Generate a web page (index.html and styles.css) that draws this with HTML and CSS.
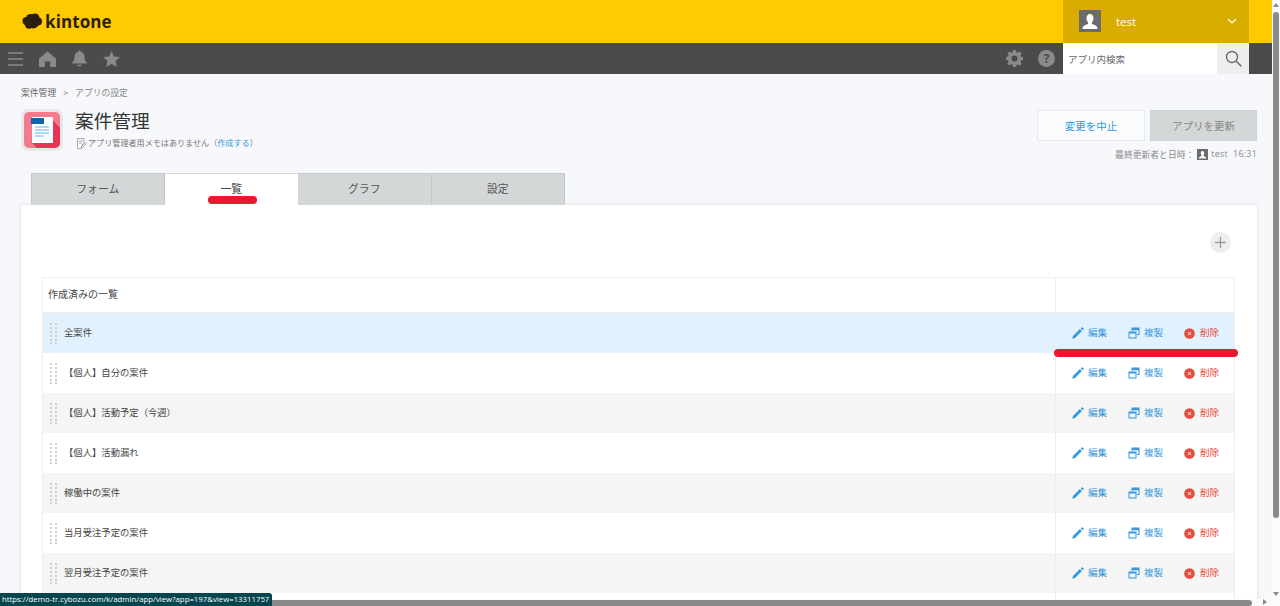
FILE: index.html
```html
<!DOCTYPE html>
<html lang="ja">
<head>
<meta charset="utf-8">
<title>案件管理 - アプリの設定</title>
<link rel="stylesheet" href="styles.css">
</head>
<body>
<svg class="defs" width="0" height="0" aria-hidden="true">
  <symbol id="i-edit" viewBox="0 0 12 12"><path d="M0.3 11.700l0.700-2.700 6.900-6.900 2 2-6.900 6.900zM8.700 1.300l0.900-0.900a0.600 0.600 0 0 1 0.800 0l1.200 1.200a0.600 0.600 0 0 1 0 0.800l-0.900 0.900z" fill="#3498db"/></symbol>
  <symbol id="i-copy" viewBox="0 0 12 12"><path d="M3.500 0.500h8v7.500h-2.500v-1h1.500v-3.800h-6v0.800h-1z" fill="#3498db"/><path d="M4.500 1h6.500v1h-6.500z" fill="#3498db"/><path d="M0.500 4.500h8v7h-8zM1.500 6.500v4h6v-4z" fill="#3498db" fill-rule="evenodd"/></symbol>
  <symbol id="i-del" viewBox="0 0 12 12"><circle cx="6" cy="6" r="5.800" fill="#e74c3c"/><path d="M4.500 4.500l3 3M7.500 4.500l-3 3" stroke="#f7d9d5" stroke-width="1.100"/></symbol>
  <symbol id="i-grip" viewBox="0 0 7 21"><g fill="#cfcfcf"><rect x="0" y="0" width="2" height="2"/><rect x="5" y="0" width="2" height="2"/><rect x="0" y="4" width="2" height="2"/><rect x="5" y="4" width="2" height="2"/><rect x="0" y="8" width="2" height="2"/><rect x="5" y="8" width="2" height="2"/><rect x="0" y="12" width="2" height="2"/><rect x="5" y="12" width="2" height="2"/><rect x="0" y="16" width="2" height="2"/><rect x="5" y="16" width="2" height="2"/><rect x="0" y="19" width="2" height="2"/><rect x="5" y="19" width="2" height="2"/></g></symbol>
  <symbol id="i-user" viewBox="0 0 22 22"><rect width="22" height="22" fill="#6b6b6b"/><path d="M3.500 19c0-3 2.600-4 5.300-5 .5-.3.500-1.200.2-1.700-.9-1-1.500-2.400-1.500-4C7.500 5.600 9 4 11 4s3.500 1.600 3.500 4.300c0 1.600-.6 3-1.500 4-.3.5-.3 1.400.2 1.700 2.700 1 5.300 2 5.300 5z" fill="#fff"/></symbol>
</svg>

<div class="app">
  <header class="topbar">
    <div class="brand">
      <svg class="brand-mark" width="21" height="17" viewBox="0 0 21 17"><g fill="#2b1d10"><circle cx="4.500" cy="8" r="4"/><circle cx="8.500" cy="5.500" r="4.500"/><circle cx="13" cy="5" r="4.500"/><circle cx="16" cy="8.500" r="4"/><circle cx="11.500" cy="10.500" r="5"/><circle cx="7" cy="11.500" r="4.200"/></g></svg>
      <span class="brand-name">kintone</span>
    </div>
    <div class="user">
      <svg class="user-icon" width="22" height="22"><use href="#i-user"/></svg>
      <span class="user-name">test</span>
      <svg class="user-caret" width="10" height="6" viewBox="0 0 10 6"><path d="M1 1l4 4 4-4" fill="none" stroke="#fff" stroke-width="1.100"/></svg>
    </div>
  </header>

  <nav class="subbar">
    <div class="nav-left">
      <svg width="15" height="14" viewBox="0 0 15 14"><path d="M0 1h15M0 7h15M0 13h15" stroke="#8a8a8a" stroke-width="1.500"/></svg>
      <svg width="17" height="16" viewBox="0 0 16 16" preserveAspectRatio="none"><path d="M8 0.500L16 7.500V16H10.500V10.500H5.500V16H0V7.500z" fill="#8a8a8a"/></svg>
      <svg width="15" height="17" viewBox="0 0 15 17"><path d="M7.500 0.500c.9 0 1.300.6 1.400 1.300C11.300 2.400 12.500 4.400 12.500 7c0 2.500.6 4 2.200 5.500V13.500H.3v-1C1.900 11 2.500 9.500 2.500 7c0-2.600 1.200-4.600 3.600-5.200.1-.7.500-1.300 1.400-1.300zM5.300 14.800h4.400a2.200 1.800 0 0 1-4.400 0z" fill="#8a8a8a"/></svg>
      <svg width="17" height="16" viewBox="0 0 17 16"><path d="M8.500 0l2.500 5.400 6 .7-4.400 4 1.200 5.900-5.300-3-5.300 3 1.200-5.900L.3 6.100l6-.7z" fill="#8a8a8a"/></svg>
    </div>
    <div class="nav-right">
      <svg class="gear" width="17" height="17" viewBox="0 0 17 17"><path fill-rule="evenodd" d="M7 0h3l.4 2.200 1.400.6L13.700 1.500l2 2-1.300 1.900.6 1.400 2 .4v2.800l-2 .4-.6 1.400 1.300 1.900-2 2-1.900-1.300-1.400.6L10 17H7l-.4-2.200-1.400-.6-1.900 1.300-2-2 1.300-1.900-.6-1.400-2-.4V7l2-.4.6-1.400L1.300 3.500l2-2 1.900 1.300 1.400-.6zM8.500 5.500a3 3 0 1 0 0 6 3 3 0 0 0 0-6z" fill="#8a8a8a"/></svg>
      <span class="help">?</span>
      <div class="search">
        <span class="search-text">アプリ内検索</span>
        <span class="search-btn">
          <svg width="17" height="17" viewBox="0 0 17 17"><circle cx="7" cy="7" r="5.500" fill="none" stroke="#6b6b6b" stroke-width="1.400"/><path d="M11 11l5.300 5.300" stroke="#6b6b6b" stroke-width="1.600"/></svg>
        </span>
      </div>
    </div>
  </nav>

  <main class="content">
    <div class="crumbs"><span class="crumb-strong">案件管理</span><span class="crumb-sep">&gt;</span><span>アプリの設定</span></div>

    <div class="apphead">
      <div class="appinfo">
        <div class="appicon">
          <svg width="36" height="36" viewBox="0 0 36 36">
            <rect width="36" height="36" rx="5" fill="#f47b8e"/>
            <path d="M27 6l9 10v15a5 5 0 0 1-5 5H13L7 30z" fill="#ea3457"/>
            <rect x="8" y="5" width="21" height="26" fill="#fff"/>
            <rect x="7" y="6" width="13" height="6" fill="#0f62ae"/>
            <path d="M11 15h14M11 18h14M11 21h14M11 24h9" stroke="#8fd0ee" stroke-width="1.300"/>
          </svg>
        </div>
        <div class="apptext">
          <h1 class="apptitle">案件管理</h1>
          <div class="memo">
            <svg width="10" height="11" viewBox="0 0 10 11"><path d="M.5.500h6.500v4L4.500 8v2.500h-4zM1.800 3h4M1.800 5h3M8.500 4.500l1 1-4 4-1.300.3.300-1.300z" fill="none" stroke="#999" stroke-width=".8"/></svg>
            <span>アプリ管理者用メモはありません（<a class="link">作成する</a>）</span>
          </div>
        </div>
      </div>
      <div class="actions">
        <div class="btns">
          <button class="btn btn-cancel">変更を中止</button>
          <button class="btn btn-save">アプリを更新</button>
        </div>
        <div class="updated">
          <span>最終更新者と日時：</span>
          <svg width="11" height="11"><use href="#i-user"/></svg>
          <span>test&nbsp;&nbsp;16:31</span>
        </div>
      </div>
    </div>

    <div class="tabs">
      <div class="tab">フォーム</div>
      <div class="tab tab-active">一覧</div>
      <div class="tab">グラフ</div>
      <div class="tab">設定</div>
    </div>

    <section class="panel">
      <div class="addrow">
        <span class="addbtn"><svg width="11" height="11" viewBox="0 0 11 11"><path d="M5.500 0v11M0 5.500h11" stroke="#9a9a9a" stroke-width="1.300"/></svg></span>
      </div>
      <div class="table">
        <div class="row row-head"><div class="cell-name">作成済みの一覧</div><div class="cell-ops"></div></div>

        <div class="row row-hover">
          <div class="cell-name"><svg class="grip" width="7" height="21"><use href="#i-grip"/></svg><span>全案件</span></div>
          <div class="cell-ops">
            <span class="op"><svg width="12" height="12"><use href="#i-edit"/></svg>編集</span>
            <span class="op"><svg width="12" height="12"><use href="#i-copy"/></svg>複製</span>
            <span class="op op-del"><svg width="11" height="11"><use href="#i-del"/></svg>削除</span>
          </div>
        </div>
        <div class="row">
          <div class="cell-name"><svg class="grip" width="7" height="21"><use href="#i-grip"/></svg><span>【個人】自分の案件</span></div>
          <div class="cell-ops">
            <span class="op"><svg width="12" height="12"><use href="#i-edit"/></svg>編集</span>
            <span class="op"><svg width="12" height="12"><use href="#i-copy"/></svg>複製</span>
            <span class="op op-del"><svg width="11" height="11"><use href="#i-del"/></svg>削除</span>
          </div>
        </div>
        <div class="row row-alt">
          <div class="cell-name"><svg class="grip" width="7" height="21"><use href="#i-grip"/></svg><span>【個人】活動予定（今週）</span></div>
          <div class="cell-ops">
            <span class="op"><svg width="12" height="12"><use href="#i-edit"/></svg>編集</span>
            <span class="op"><svg width="12" height="12"><use href="#i-copy"/></svg>複製</span>
            <span class="op op-del"><svg width="11" height="11"><use href="#i-del"/></svg>削除</span>
          </div>
        </div>
        <div class="row">
          <div class="cell-name"><svg class="grip" width="7" height="21"><use href="#i-grip"/></svg><span>【個人】活動漏れ</span></div>
          <div class="cell-ops">
            <span class="op"><svg width="12" height="12"><use href="#i-edit"/></svg>編集</span>
            <span class="op"><svg width="12" height="12"><use href="#i-copy"/></svg>複製</span>
            <span class="op op-del"><svg width="11" height="11"><use href="#i-del"/></svg>削除</span>
          </div>
        </div>
        <div class="row row-alt">
          <div class="cell-name"><svg class="grip" width="7" height="21"><use href="#i-grip"/></svg><span>稼働中の案件</span></div>
          <div class="cell-ops">
            <span class="op"><svg width="12" height="12"><use href="#i-edit"/></svg>編集</span>
            <span class="op"><svg width="12" height="12"><use href="#i-copy"/></svg>複製</span>
            <span class="op op-del"><svg width="11" height="11"><use href="#i-del"/></svg>削除</span>
          </div>
        </div>
        <div class="row">
          <div class="cell-name"><svg class="grip" width="7" height="21"><use href="#i-grip"/></svg><span>当月受注予定の案件</span></div>
          <div class="cell-ops">
            <span class="op"><svg width="12" height="12"><use href="#i-edit"/></svg>編集</span>
            <span class="op"><svg width="12" height="12"><use href="#i-copy"/></svg>複製</span>
            <span class="op op-del"><svg width="11" height="11"><use href="#i-del"/></svg>削除</span>
          </div>
        </div>
        <div class="row row-alt">
          <div class="cell-name"><svg class="grip" width="7" height="21"><use href="#i-grip"/></svg><span>翌月受注予定の案件</span></div>
          <div class="cell-ops">
            <span class="op"><svg width="12" height="12"><use href="#i-edit"/></svg>編集</span>
            <span class="op"><svg width="12" height="12"><use href="#i-copy"/></svg>複製</span>
            <span class="op op-del"><svg width="11" height="11"><use href="#i-del"/></svg>削除</span>
          </div>
        </div>
        <div class="row"><div class="cell-name"></div><div class="cell-ops"></div></div>
      </div>
    </section>
  </main>
</div>

<div class="vscroll">
  <span class="arrow-up"></span>
  <span class="vthumb"></span>
  <span class="arrow-down"></span>
</div>
<div class="hscroll">
  <span class="hthumb"></span>
  <span class="arrow-right"></span>
</div>
<div class="status">https://demo-tr.cybozu.com/k/admin/app/view?app=197&amp;view=13311757</div>
<span class="mark mark-tab"></span>
<span class="mark mark-ops"></span>
</body>
</html>
```

FILE: styles.css
```css
* { box-sizing: border-box; }
html, body { margin: 0; padding: 0; height: 606px; overflow: hidden; }
body {
  position: relative;
  background: #fafafa;
  font-family: "Noto Sans CJK JP", "Open Sans", sans-serif;
  color: #444;
  font-size: 10px;
}
.defs { position: absolute; }
svg { display: block; flex: none; }
.app { width: 1272px; height: 606px; overflow: hidden; background: #f6f8fb; }

.topbar {
  height: 43px;
  background: #ffcb00;
  display: flex;
  justify-content: space-between;
  padding: 0 23px 0 22px;
}
.brand { display: flex; align-items: center; gap: 2px; padding-bottom: 1px; }
.brand-mark { margin-top: 0; }
.brand-name {
  font-family: "Open Sans", sans-serif;
  font-weight: 700;
  font-size: 17px;
  line-height: 1;
  color: #2b1d10;
  letter-spacing: 0.1px;
}
.user {
  width: 186px;
  background: #d8ad00;
  display: flex;
  align-items: center;
  padding: 0 12px 1px 16px;
}
.user-name {
  font-family: "Open Sans", sans-serif;
  font-size: 11.500px;
  color: #fff;
  margin-left: 15px;
  flex: 1;
}
.subbar {
  height: 31px;
  background: #4b4b4b;
  display: flex;
  justify-content: space-between;
  padding: 0 23px 0 8px;
}
.nav-left { display: flex; align-items: center; gap: 16px; }
.nav-right { display: flex; align-items: center; }
.help {
  width: 17px;
  height: 17px;
  border-radius: 50%;
  background: #8a8a8a;
  color: #4b4b4b;
  font-family: "Open Sans", sans-serif;
  font-weight: 700;
  font-size: 12px;
  line-height: 17px;
  text-align: center;
  margin-left: 15px;
  margin-right: 8px;
}
.search {
  width: 186px;
  height: 31px;
  background: #fff;
  display: flex;
  align-items: center;
  justify-content: space-between;
  padding-left: 5px;
}
.search-text { font-size: 9.500px; color: #666; }
.search-btn {
  width: 32px;
  height: 31px;
  background: #eeeeee;
  display: flex;
  align-items: center;
  justify-content: center;
}

.content { padding: 0 15px 0 21px; }
.crumbs {
  display: flex;
  height: 12px;
  margin-top: 13px;
  font-size: 8.800px;
  line-height: 12px;
  color: #888;
}
.crumb-strong { color: #666; }
.crumb-sep { margin: 0 7px; }
.apphead { display: flex; justify-content: space-between; height: 67px; margin-top: 10px; }
.appinfo { display: flex; }
.appicon {
  width: 42px;
  height: 42px;
  padding: 3px;
  background: #e8e8e8;
  border-radius: 7px;
}
.apptext { margin-left: 12px; }
.apptitle {
  margin: -3px 0 0;
  font-size: 18.700px;
  line-height: 27px;
  font-weight: 400;
  color: #333;
}
.memo {
  display: flex;
  align-items: center;
  gap: 1px;
  margin-top: 4px;
  margin-left: 2px;
  font-size: 8.100px;
  line-height: 12px;
  color: #777;
}
.link { color: #3498db; }
.actions { display: flex; flex-direction: column; align-items: flex-end; }
.btns { display: flex; gap: 5px; margin-top: 1px; }
.btn {
  height: 31px;
  font-family: inherit;
  font-size: 10.500px;
  padding: 0;
  border-radius: 0;
}
.btn-cancel { width: 108px; background: #fbfcfd; border: 1px solid #e6e9ec; color: #3498db; }
.btn-save { width: 107px; background: #d4d7d8; border: 1px solid #d0d3d4; color: #888; }
.updated {
  display: flex;
  align-items: center;
  gap: 3px;
  margin-top: 7px;
  height: 12px;
  font-size: 8.800px;
  color: #888;
}
.updated span:last-child { font-family: "Open Sans", sans-serif; letter-spacing: 0.3px; }

.tabs { display: flex; margin-left: 10px; height: 32px; margin-top: -3px; }
.tab {
  width: 133.500px;
  background: #d4d7d8;
  border-top: 1px solid #c6c9ca;
  border-right: 1px solid #c6c9ca;
  text-align: center;
  font-size: 10.800px;
  line-height: 29px;
  color: #555;
}
.tab:first-child { border-left: 1px solid #c6c9ca; }
.tab-active { background: #fff; border-right: 0; border-top-color: #d8d8d8; color: #444; }

.panel {
  width: 1236px;
  height: 420px;
  background: #fff;
  padding: 0 22px 0 21px;
  box-shadow: 0 0 4px rgba(0, 0, 0, 0.12);
}
.addrow { display: flex; justify-content: flex-end; height: 72px; padding-top: 27px; }
.addbtn {
  width: 21px;
  height: 21px;
  margin-right: 4px;
  border-radius: 50%;
  background: #eeeeee;
  display: flex;
  align-items: center;
  justify-content: center;
}
.table { border: 1px solid #eeeeee; }
.row { display: flex; height: 40px; background: #fff; }
.row-head { height: 35px; border-bottom: 1px solid #eaeaea; }
.row-hover { background: #e1f1fe; }
.row-alt { background: #f5f5f5; }
.cell-name {
  flex: 1;
  display: flex;
  align-items: center;
  padding: 0 0 3px 7px;
  font-size: 9.330px;
  color: #444;
  border-right: 1px solid #eeeeee;
}
.row-head .cell-name { padding-left: 5px; font-size: 10px; }
.grip { margin: 3px 7px 0 0; }
.cell-ops {
  width: 178px;
  display: flex;
  align-items: center;
  gap: 21px;
  padding: 0 0 2px 16px;
}
.op { display: flex; align-items: center; gap: 4px; font-size: 9.500px; color: #3498db; }
.op svg { margin-top: 2px; }
.op-del { gap: 5px; color: #e74c3c; }

.vscroll {
  position: absolute;
  top: 0;
  right: 0;
  width: 8px;
  height: 599px;
  background: #fbfbfb;
}
.arrow-up {
  position: absolute;
  top: 3px;
  left: 1px;
  border: 3px solid transparent;
  border-top: 0;
  border-bottom: 4px solid #8a8a8a;
}
.vthumb {
  position: absolute;
  top: 12px;
  left: 1px;
  width: 6px;
  height: 506px;
  border-radius: 3px;
  background: #8a8a8a;
}
.arrow-down {
  position: absolute;
  top: 592px;
  left: 1px;
  border: 3px solid transparent;
  border-bottom: 0;
  border-top: 4px solid #8a8a8a;
}
.hscroll {
  position: absolute;
  left: 0;
  bottom: 0;
  width: 1280px;
  height: 7px;
  background: #fbfbfb;
}
.hthumb {
  position: absolute;
  top: 1px;
  left: 0;
  width: 1252px;
  height: 6px;
  border-radius: 3px;
  background: #8a8a8a;
}
.arrow-right {
  position: absolute;
  top: 0;
  left: 1263px;
  border: 3px solid transparent;
  border-right: 0;
  border-left: 4px solid #8a8a8a;
}
.status {
  position: absolute;
  left: 0;
  bottom: 0;
  width: 272px;
  height: 13px;
  padding-left: 2px;
  background: #05454f;
  border-top-right-radius: 3px;
  color: #fff;
  font-family: "Open Sans", sans-serif;
  font-size: 7.800px;
  line-height: 13px;
  white-space: nowrap;
  overflow: hidden;
}
.mark { position: absolute; background: #e8192f; border-radius: 4px; }
.mark-tab { left: 208px; top: 196px; width: 49px; height: 8px; }
.mark-ops { left: 1054px; top: 349px; width: 184px; height: 8px; }
```
